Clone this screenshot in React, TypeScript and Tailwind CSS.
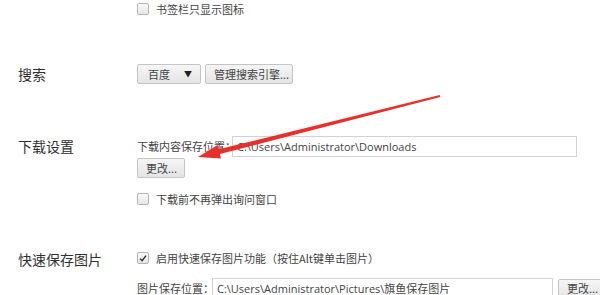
import { ReactNode } from "react";

const cjk = "font-['Noto_Sans_CJK_SC','Noto_Sans',sans-serif]";

function Box({ checked = false }: { checked?: boolean }) {
  return (
    <span className="relative flex size-[12px] shrink-0 items-center justify-center rounded-[2px] border border-[#b4b4b4] bg-[linear-gradient(#fafafa,#e6e6e6)]">
      {checked ? (
        <svg viewBox="0 0 12 12" className="size-[11px]">
          <path d="M2.5 6.2 L5 8.6 L9.6 2.6" fill="none" stroke="#333" strokeWidth="1.8" />
        </svg>
      ) : null}
    </span>
  );
}

function Check({ label, checked }: { label: string; checked?: boolean }) {
  return (
    <div className="flex h-[14px] items-center gap-[7px]">
      <Box checked={checked} />
      <span className="whitespace-nowrap text-[11px] leading-none text-[#444]">{label}</span>
    </div>
  );
}

function Btn({ children, className = "" }: { children: ReactNode; className?: string }) {
  return (
    <div
      className={`flex h-[20px] shrink-0 items-center whitespace-nowrap rounded-[2px] border border-[#c4c4c4] bg-[linear-gradient(#f6f6f6,#e4e4e4)] px-[8px] text-[11px] leading-none text-[#444] ${className}`}
    >
      {children}
    </div>
  );
}

function Field({ value, className = "" }: { value: string; className?: string }) {
  return (
    <div
      className={`flex h-[21px] shrink-0 items-center whitespace-nowrap border border-[#d2d2d2] bg-white px-[4px] font-['Open_Sans','Noto_Sans_CJK_SC',sans-serif] text-[11px] leading-none text-[#444] ${className}`}
    >
      {value}
    </div>
  );
}

function Section({ title, children, className = "" }: { title: string; children: ReactNode; className?: string }) {
  return (
    <div className={`flex ${className}`}>
      <div className="w-[137px] shrink-0 pl-[18px] text-[14px] leading-[20px] text-[#303030]">{title}</div>
      <div className="flex flex-col items-start">{children}</div>
    </div>
  );
}

export default function App() {
  return (
    <div className={`relative h-[295px] w-[600px] overflow-hidden bg-white ${cjk}`}>
      <div className="pl-[137px] pt-[2px]">
        <Check label="书签栏只显示图标" />
      </div>

      <Section title="搜索" className="mt-[48px] items-center">
        <div className="flex gap-[4px]">
          <Btn className="w-[64px] justify-between pl-[10px]">
            <span>百度</span>
            <span className="text-[8px] text-[#222]">▼</span>
          </Btn>
          <Btn className="w-[88px]">管理搜索引擎...</Btn>
        </div>
      </Section>

      <Section title="下载设置" className="mt-[52px]">
        <div className="flex items-center">
          <span className="w-[95px] whitespace-nowrap text-[11px] leading-none text-[#444]">下载内容保存位置：</span>
          <Field value="C:\Users\Administrator\Downloads" className="w-[345px]" />
        </div>
        <Btn className="mt-[1px] w-[48px]">更改...</Btn>
        <div className="mt-[14px]">
          <Check label="下载前不再弹出询问窗口" />
        </div>
      </Section>

      <Section title="快速保存图片" className="mt-[43px]">
        <div className="mt-[2px]">
          <Check label="启用快速保存图片功能（按住Alt键单击图片）" checked />
        </div>
        <div className="mt-[13px] flex items-center">
          <span className="w-[75px] whitespace-nowrap text-[11px] leading-none text-[#444]">图片保存位置：</span>
          <Field value="C:\Users\Administrator\Pictures\旗鱼保存图片" className="w-[341px]" />
          <Btn className="ml-[5px] w-[48px]">更改...</Btn>
        </div>
      </Section>

      <svg className="pointer-events-none absolute left-0 top-0" width="600" height="295">
        <polygon
          points="440.3,97 219.9,154.1 221,158.5 198,157 217.6,144.9 218.7,149.3 439.8,95"
          fill="#e8302a"
        />
      </svg>
    </div>
  );
}
